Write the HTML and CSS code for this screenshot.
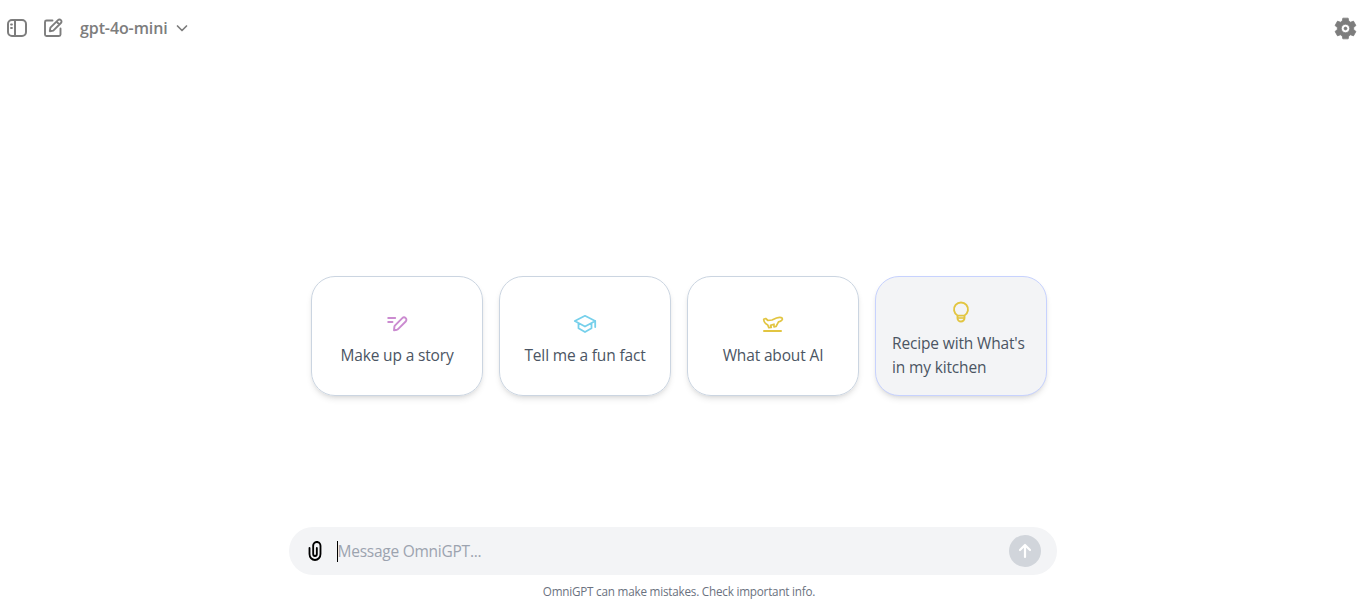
FILE: index.html
```html
<!DOCTYPE html>
<html lang="en">
<head>
<meta charset="utf-8">
<title>OmniGPT</title>
<link rel="stylesheet" href="styles.css">
</head>
<body>
<header class="topbar">
  <button class="icon-btn" aria-label="Toggle sidebar"><svg class="icon-24" viewBox="0 0 24 24" fill="none" stroke="currentColor" stroke-width="2" stroke-linecap="round"><rect x="3" y="4" width="18" height="16" rx="4"/><path d="M10 4v16"/><path d="M6 8.500h1M6 12h1" stroke-width="1.800"/></svg></button>
  <button class="icon-btn" aria-label="New chat"><svg class="icon-24" viewBox="0 0 24 24" fill="none" stroke="currentColor" stroke-width="1.900" stroke-linejoin="round" stroke-linecap="round"><path d="M11.500 4.500H5.500a1.500 1.500 0 0 0-1.500 1.500V18.500A1.500 1.500 0 0 0 5.500 20H18a1.500 1.500 0 0 0 1.500-1.500V12.500"/><path d="M8.800 15.200l.6-3.500 7.600-7.600a2.050 2.050 0 0 1 2.900 2.900l-7.600 7.600z M15.500 5.600l2.900 2.900"/></svg></button>
  <button class="model"><span>gpt-4o-mini</span><svg class="chevron" viewBox="0 0 16 16" fill="none" stroke="currentColor" stroke-width="1.700" stroke-linecap="round" stroke-linejoin="round"><path d="M3.500 6 8 10.500 12.500 6"/></svg></button>
  <button class="settings" aria-label="Settings"><svg viewBox="0 0 24 24" fill="currentColor" stroke="currentColor" stroke-width=".8" stroke-linejoin="round"><path fill-rule="evenodd" d="M9.200 1.200h5.600l.6 3.100 1.900 1.100 3-1.100 2.600 4.600-2.400 2v2.200l2.400 2-2.600 4.600-3-1.100-1.900 1.100-.6 3.100H9.200l-.6-3.100-1.900-1.100-3 1.100L1.100 15.100l2.400-2v-2.200l-2.400-2 2.600-4.600 3 1.100 1.900-1.100zM12 7.600a4.400 4.400 0 1 0 0 8.800 4.400 4.400 0 0 0 0-8.800z"/><circle cx="12" cy="12" r="1.500"/></svg></button>
</header>
<main class="cards">
  <button class="card"><svg class="icon-24 story" viewBox="0 0 24 24" fill="none" stroke="currentColor" stroke-width="1.900" stroke-linecap="round" stroke-linejoin="round"><path d="M3.200 6h7M3.200 10h4.300"/><path d="M9 18.300l.4-3.600q.1-.7.700-1.300L17.300 6.100a2.400 2.400 0 0 1 3.400 3.400L13.300 16.900q-.6.600-1.300.8z"/></svg><span>Make up a story</span></button>
  <button class="card"><svg class="icon-24 fact" viewBox="0 0 24 24" fill="none" stroke="currentColor" stroke-width="1.800" stroke-linecap="round" stroke-linejoin="round"><path d="M12 3.800 1.800 9 12 14.500 22.200 9zM5.500 11.500v4.800L12 20l6.500-3.700v-4.800M22.200 9v6"/></svg><span>Tell me a fun fact</span></button>
  <button class="card"><svg class="icon-24 plane" viewBox="0 0 24 24" fill="none" stroke="currentColor" stroke-width="1.700" stroke-linecap="round" stroke-linejoin="round"><path d="M3 19h17" stroke-width="2"/><path d="M2.700 7.300l2-.8 2.300 2 4-.5 4.500-2q4-1.300 5.700.1c.9 1.700-1 3-3.700 3.800L15 14.500l-2 .3v-2.600l-3.500 1.200.8 2-2.500.2-1-2.500C4.100 11.700 2.800 9.800 2.700 7.300z"/></svg><span>What about AI</span></button>
  <button class="card card-active"><svg class="icon-24 bulb" viewBox="0 0 24 24" fill="none" stroke="currentColor" stroke-width="1.900" stroke-linejoin="round"><path d="M8.500 15.500a7 7 0 1 1 7 0V18a3.500 3.500 0 0 1-7 0zM8.500 15.600h7"/><path d="M8.500 18h7" stroke-width="1.600"/></svg><span>Recipe with What's in my kitchen</span></button>
</main>
<footer class="composer-wrap">
  <div class="composer">
    <svg class="clip" viewBox="0 0 24 24" preserveAspectRatio="none" fill="currentColor"><path d="M9 7C9 4.239 11.239 2 14 2s5 2.239 5 5v8a7 7 0 0 1-14 0V9a1 1 0 0 1 2 0v6a5 5 0 0 0 10 0V7a3 3 0 0 0-6 0v8a1 1 0 0 0 2 0V9a1 1 0 0 1 2 0v6a3 3 0 0 1-6 0z"/></svg>
    <span class="caret"></span><span class="placeholder">Message OmniGPT...</span>
    <button class="send" aria-label="Send"><svg class="icon-24" viewBox="0 0 24 24" fill="none" stroke="currentColor" stroke-width="2.200" stroke-linecap="round" stroke-linejoin="round"><path d="M12 18V6M7 11l5-5 5 5"/></svg></button>
  </div>
  <p class="note">OmniGPT can make mistakes. Check important info.</p>
</footer>
</body>
</html>
```
FILE: styles.css
```css
* { box-sizing: border-box; }
body { margin: 0; height: 607px; display: flex; flex-direction: column; overflow: hidden; background: #fff; font-family: "Open Sans", "Noto Sans", sans-serif; }
button { border: 0; padding: 0; background: none; color: inherit; font: inherit; }
svg { display: block; flex: none; }
.icon-24 { width: 24px; height: 24px; }
.topbar { height: 56px; display: flex; align-items: center; padding-left: 5px; color: #7d7d7d; }
.icon-btn { width: 24px; margin-right: 12px; }
.model { display: flex; align-items: center; gap: 6px; margin-left: 3px; font-size: 16px; font-weight: 600; letter-spacing: -.1px; }
.chevron { width: 16px; height: 16px; }
.settings { margin-left: auto; width: 23px; margin-right: 1px; padding-top: 1px; }
.cards { margin: 220px 0 0 311px; display: flex; gap: 16px; }
.card { width: 172px; height: 120px; padding: 7px 16px 0; border: 1px solid #cbd5e1; border-radius: 24px; display: flex; flex-direction: column; align-items: center; justify-content: center; gap: 7px; font-size: 15.5px; letter-spacing: -.15px; line-height: 24px; color: #4b5563; text-align: left; box-shadow: 0 4px 6px -1px rgba(0,0,0,.1), 0 2px 4px -2px rgba(0,0,0,.1); }
.card span { white-space: nowrap; }
.card-active { background: #f3f4f6; border-color: #c7d2fe; }
.card-active span { white-space: normal; }
.story { color: #cb8bd0; }
.fact { color: #76d0eb; }
.plane, .bulb { color: #e2c541; }
.composer-wrap { margin: 131px 0 0 289px; width: 780px; }
.composer { width: 768px; height: 48px; border-radius: 24px; background: #f3f4f6; display: flex; align-items: center; padding: 0 16px 0 15px; font-size: 15.5px; letter-spacing: -.25px; color: #9ca3af; }
.clip { width: 22px; height: 24px; color: #000; }
.caret { width: 1px; height: 21px; background: #000; margin-left: 11px; }
.placeholder { margin-left: -.5px; }
.send { width: 32px; height: 32px; border-radius: 50%; background: #d1d5db; color: #fff; display: flex; align-items: center; justify-content: center; margin-left: auto; }
.note { margin: 8px 0 0; font-size: 11.7px; letter-spacing: -.21px; line-height: 16px; color: #6b7280; text-align: center; }
```
